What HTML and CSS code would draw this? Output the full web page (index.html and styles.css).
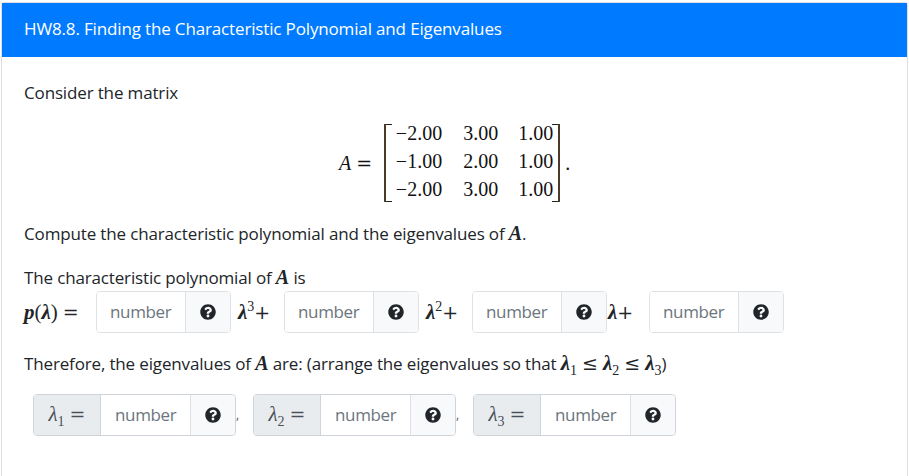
FILE: index.html
```html
<!DOCTYPE html>
<html lang="en">
<head>
    <meta charset="UTF-8">
    <meta name="viewport" content="width=device-width, initial-scale=1.0">
    <title>HW8.8</title>
    <link rel="stylesheet" href="styles.css">
</head>
<body>
    <svg class="icon-defs" width="0" height="0">
        <symbol id="help" viewBox="0 0 512 512">
            <path d="M504 256c0 136.997-111.043 248-248 248S8 392.997 8 256C8 119.083 119.043 8 256 8s248 111.083 248 248zM262.655 90c-54.497 0-89.255 22.957-116.549 63.758-3.536 5.286-2.353 12.415 2.715 16.258l34.699 26.31c5.205 3.947 12.621 3.008 16.665-2.122 17.864-22.658 30.113-35.797 57.303-35.797 20.429 0 45.698 13.148 45.698 32.958 0 14.976-12.363 22.667-32.534 33.976C247.128 238.528 216 254.941 216 296v4c0 6.627 5.373 12 12 12h56c6.627 0 12-5.373 12-12v-1.333c0-28.462 83.186-29.647 83.186-106.667 0-58.002-60.165-102-116.531-102zM256 338c-25.365 0-46 20.635-46 46 0 25.364 20.635 46 46 46s46-20.636 46-46c0-25.365-20.635-46-46-46z"/>
        </symbol>
    </svg>

    <div class="card">
        <div class="card-header">HW8.8. Finding the Characteristic Polynomial and Eigenvalues</div>
        <div class="card-body">
            <p class="intro">Consider the matrix</p>

            <div class="display">
                <span class="math">A</span><span class="rel">=</span>
                <div class="matrix">
                    <span>−2.00</span><span>3.00</span><span>1.00</span>
                    <span>−1.00</span><span>2.00</span><span>1.00</span>
                    <span>−2.00</span><span>3.00</span><span>1.00</span>
                </div>
                <span class="period">.</span>
            </div>

            <p class="compute">Compute the characteristic polynomial and the eigenvalues of <b class="math">A</b>.</p>

            <p class="lead">The characteristic polynomial of <b class="math">A</b> is</p>
            <div class="poly">
                <span class="tex p-label"><b><i>p</i></b>(<b><i>λ</i></b>)<span class="rel">=</span></span>
                <div class="input-group"><div class="field">number</div><div class="addon"><svg class="help"><use href="#help"/></svg></div></div>
                <span class="tex term"><b><i>λ</i></b><sup>3</sup><span class="plus">+</span></span>
                <div class="input-group"><div class="field">number</div><div class="addon"><svg class="help"><use href="#help"/></svg></div></div>
                <span class="tex term"><b><i>λ</i></b><sup>2</sup><span class="plus">+</span></span>
                <div class="input-group"><div class="field">number</div><div class="addon"><svg class="help"><use href="#help"/></svg></div></div>
                <span class="tex term t3"><b><i>λ</i></b><span class="plus">+</span></span>
                <div class="input-group"><div class="field">number</div><div class="addon"><svg class="help"><use href="#help"/></svg></div></div>
            </div>

            <p class="therefore">Therefore, the eigenvalues of <b class="math">A</b> are: (arrange the eigenvalues so that <span class="tex"><b><i>λ</i></b><sub>1</sub><span class="le">≤</span><b><i>λ</i></b><sub>2</sub><span class="le">≤</span><b><i>λ</i></b><sub>3</sub></span>)</p>

            <div class="eigen">
                <div class="input-group"><div class="prepend tex"><i>λ</i><sub>1</sub><span class="rel">=</span></div><div class="field">number</div><div class="addon"><svg class="help"><use href="#help"/></svg></div></div>
                <span class="comma">,</span>
                <div class="input-group"><div class="prepend tex"><i>λ</i><sub>2</sub><span class="rel">=</span></div><div class="field">number</div><div class="addon"><svg class="help"><use href="#help"/></svg></div></div>
                <span class="comma">,</span>
                <div class="input-group"><div class="prepend tex"><i>λ</i><sub>3</sub><span class="rel">=</span></div><div class="field">number</div><div class="addon"><svg class="help"><use href="#help"/></svg></div></div>
            </div>
        </div>
    </div>
</body>
</html>
```

FILE: styles.css
```css
html, body {
    height: 100%;
    overflow: hidden;
}
body {
    font-family: "Open Sans", "Noto Sans", Arial, sans-serif;
    font-size: 17px;
    letter-spacing: -0.15px;
    color: #212529;
    background-color: #fff;
    margin: 0;
    padding: 2px 0 0 1px;
    box-sizing: border-box;
}
p {
    margin: 0;
}
.icon-defs {
    position: absolute;
}
.card {
    width: 907px;
    height: 474px;
    box-sizing: border-box;
    border: 1px solid #dfdfdf;
    border-bottom: 0;
    border-radius: 4px 4px 0 0;
}
.card-header {
    height: 54px;
    box-sizing: border-box;
    padding: 0 22px 4px;
    display: flex;
    align-items: center;
    background-color: #007bff;
    color: #fff;
}
.card-body {
    padding: 24px 22px 0;
    line-height: 24px;
}
.math {
    font-family: "Liberation Serif", serif;
    font-style: italic;
    font-size: 20px;
    letter-spacing: 0;
}
.tex {
    font-family: "Liberation Serif", serif;
    font-size: 21px;
    letter-spacing: 0;
    white-space: nowrap;
}
.tex sup, .tex sub {
    font-size: 14px;
    line-height: 0;
}
.rel, .plus, .le {
    font-family: "DejaVu Serif", serif;
    font-weight: normal;
}
.rel {
    margin-left: 5px;
    font-size: 19px;
}
.plus {
    font-size: 19px;
}
.le {
    font-size: 19px;
    margin: 0 5px;
}
.display {
    display: flex;
    align-items: center;
    margin: 19px 0 0 315px;
    font-family: "Liberation Serif", serif;
    font-size: 20px;
    letter-spacing: 0;
    color: #111;
}
.display .rel {
    margin-right: 12px;
}
.matrix {
    display: grid;
    grid-template-columns: 56px 56px 55px;
    grid-auto-rows: 28px;
    justify-items: end;
    align-items: center;
    align-content: center;
    box-sizing: border-box;
    height: 78px;
    padding: 0 5px 4px 0;
    border-left: 2px solid #4b3a28;
    border-right: 2px solid #4b3a28;
    position: relative;
    line-height: 28px;
}
.matrix::before, .matrix::after {
    content: "";
    position: absolute;
    top: 0;
    bottom: 0;
    width: 6px;
    border-top: 1px solid #222;
    border-bottom: 1px solid #222;
    box-sizing: border-box;
}
.matrix::before {
    left: 0;
}
.matrix::after {
    right: 0;
}
.period {
    margin-left: 5px;
}
.compute {
    margin-top: 19px;
}
.lead {
    margin-top: 19px;
}
.poly {
    display: flex;
    align-items: center;
    margin-top: 1px;
}
.p-label {
    width: 72px;
}
.input-group {
    display: flex;
    height: 42px;
    box-sizing: border-box;
    border: 1px solid #dee2e6;
    border-radius: 4px;
    overflow: hidden;
    flex-shrink: 0;
}
.field {
    width: 89px;
    box-sizing: border-box;
    display: flex;
    align-items: center;
    padding-left: 13px;
    letter-spacing: -0.35px;
    color: #6c757d;
    background-color: #fff;
    border-right: 1px solid #dee2e6;
}
.addon {
    width: 44px;
    box-sizing: border-box;
    display: flex;
    align-items: center;
    justify-content: center;
    background-color: #f8f9fa;
}
.help {
    width: 16px;
    height: 16px;
    fill: #212529;
}
.term {
    display: block;
    width: 53px;
    padding-left: 7px;
    box-sizing: border-box;
}
.t3 {
    width: 42px;
    padding-left: 1px;
}
.therefore {
    margin-top: 18px;
}
.eigen {
    display: flex;
    align-items: center;
    margin: 18px 0 0 9px;
}
.prepend {
    width: 67px;
    box-sizing: border-box;
    text-align: center;
    line-height: 38px;
    background-color: #e9ecef;
    border-right: 1px solid #ced4da;
    color: #495057;
}
.eigen .input-group {
    border-color: #ced4da;
}
.eigen .field {
    width: 90px;
    padding-left: 14px;
}
.comma {
    width: 17px;
    font-size: 12px;
    color: #555;
}
```
